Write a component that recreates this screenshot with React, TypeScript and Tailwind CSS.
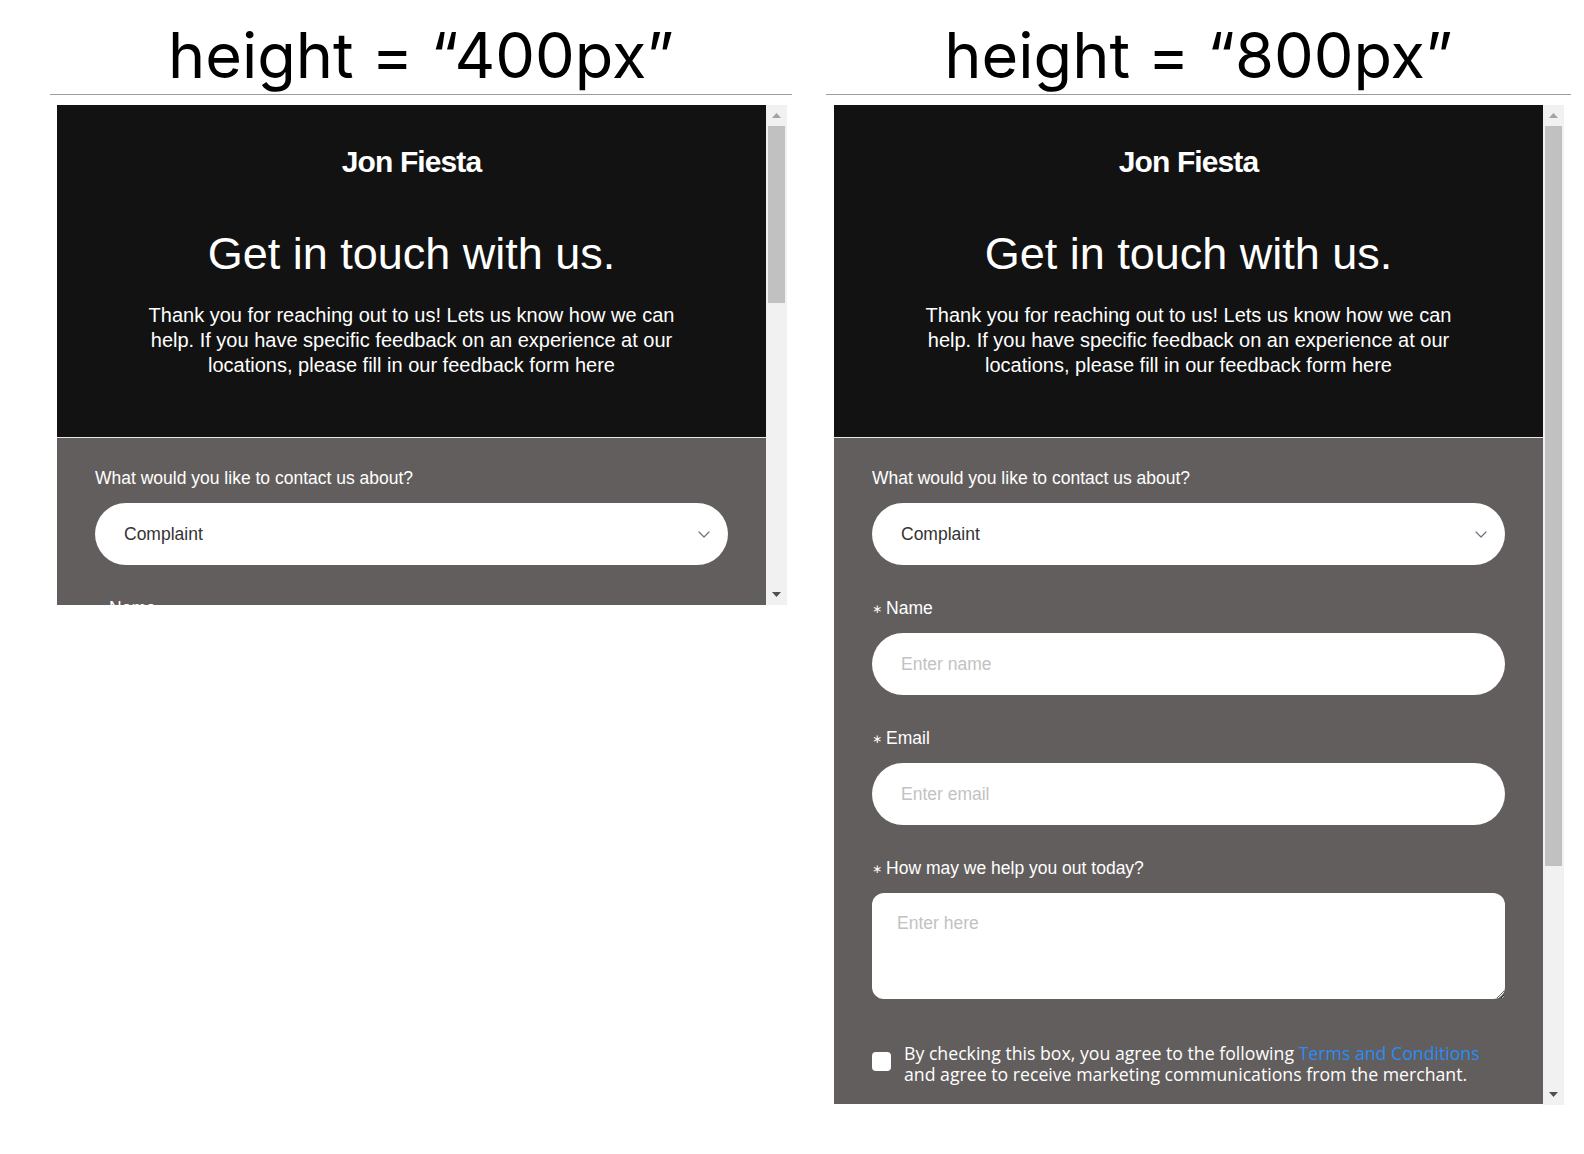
import React from 'react';

const sans = "font-['Liberation_Sans',Arial,sans-serif]";

const Chevron: React.FC = () => (
  <svg width="12" height="7" viewBox="0 0 12 7" fill="none">
    <path d="M1 1l5 5 5-5" stroke="#6b7280" strokeWidth="1.2" strokeLinecap="round" strokeLinejoin="round" />
  </svg>
);

const Arrow: React.FC<{ up?: boolean; color: string }> = ({ up, color }) => (
  <svg width="9" height="5" viewBox="0 0 9 5">
    <path d={up ? 'M0 5h9L4.5 0z' : 'M0 0h9L4.5 5z'} fill={color} />
  </svg>
);

const Label: React.FC<{ text: string; required?: boolean }> = ({ text, required }) => (
  <div className="flex items-center text-[17.5px] leading-[21px] text-white">
    {required && <span className="mr-[4px] font-['DejaVu_Sans',sans-serif] text-[12px] leading-none">∗</span>}
    <span>{text}</span>
  </div>
);

const ContactForm: React.FC = () => (
  <div className={sans}>
    <div className="bg-[#121212] pt-[39px] pb-[59px] text-center text-white">
      <h1 className="text-[30px] leading-[36px] font-bold tracking-[-0.9px]">Jon Fiesta</h1>
      <h2 className="mt-[48px] text-[45px] leading-[52px]">Get in touch with us.</h2>
      <p className="mx-auto mt-[23px] max-w-[540px] text-[20px] leading-[25px]">
        Thank you for reaching out to us! Lets us know how we can help. If you have specific feedback on an
        experience at our locations, please fill in our feedback form here
      </p>
    </div>
    <div className="border-t border-[#e9e9e9] bg-[#625e5d] px-[38px] pt-[30px] pb-[19px]">
      <div className="mb-[33px]">
        <Label text="What would you like to contact us about?" />
        <div className="mt-[14px] flex h-[62px] items-center justify-between rounded-full bg-white pl-[29px] pr-[18px]">
          <span className="text-[17.5px] text-[#333333]">Complaint</span>
          <Chevron />
        </div>
      </div>
      <div className="mb-[33px]">
        <Label text="Name" required />
        <input
          placeholder="Enter name"
          className="mt-[14px] block h-[62px] w-full rounded-full bg-white px-[29px] text-[17.5px] text-[#333333] outline-none placeholder:text-[#c2c2c2]"
        />
      </div>
      <div className="mb-[33px]">
        <Label text="Email" required />
        <input
          placeholder="Enter email"
          className="mt-[14px] block h-[62px] w-full rounded-full bg-white px-[29px] text-[17.5px] text-[#333333] outline-none placeholder:text-[#c2c2c2]"
        />
      </div>
      <div>
        <Label text="How may we help you out today?" required />
        <textarea
          placeholder="Enter here"
          className="mt-[14px] block h-[106px] w-full rounded-[12px] bg-white px-[25px] pt-[20px] text-[17.5px] leading-[21px] text-[#333333] outline-none placeholder:text-[#c2c2c2]"
        />
      </div>
      <div className="mt-[44px] flex items-start gap-[13px]">
        <span className="mt-[9px] block h-[19px] w-[19px] shrink-0 rounded-[4px] bg-white" />
        <p className="font-['Open_Sans','Noto_Sans',sans-serif] text-[17.7px] leading-[21px] text-white">
          By checking this box, you agree to the following{' '}
          <a className="text-[#2b8cf5]">Terms and Conditions</a> and agree to receive marketing communications
          from the merchant.
        </p>
      </div>
    </div>
  </div>
);

const Frame: React.FC<{ title: string; tall?: boolean }> = ({ title, tall }) => (
  <div className={tall ? 'w-[745px]' : 'w-[742px]'}>
    <div className="border-b border-[#9c9c9c] pt-[17px] text-center font-['Inter',sans-serif] text-[63px] leading-[77px] text-black">
      {title}
    </div>
    <div className={`mt-[10px] flex ${tall ? 'ml-[8px] h-[1000px]' : 'ml-[7px] h-[500px]'}`}>
      <div className="w-[709px] overflow-hidden">
        <ContactForm />
      </div>
      <div className="flex w-[21px] flex-col bg-[#f1f1f1]">
        <div className="flex h-[21px] items-center justify-center">
          <Arrow up color="#a3a3a3" />
        </div>
        <div className={`mx-[2px] bg-[#c1c1c1] ${tall ? 'h-[740px]' : 'h-[177px]'}`} />
        <div className="flex-1" />
        <div className="flex h-[21px] items-center justify-center">
          <Arrow color="#505050" />
        </div>
      </div>
    </div>
  </div>
);

export default function App() {
  return (
    <div className="min-h-[1154px] w-[1584px] bg-white">
      <div className="flex gap-[34px] pl-[50px]">
        <Frame title="height = “400px”" />
        <Frame title="height = “800px”" tall />
      </div>
    </div>
  );
}
